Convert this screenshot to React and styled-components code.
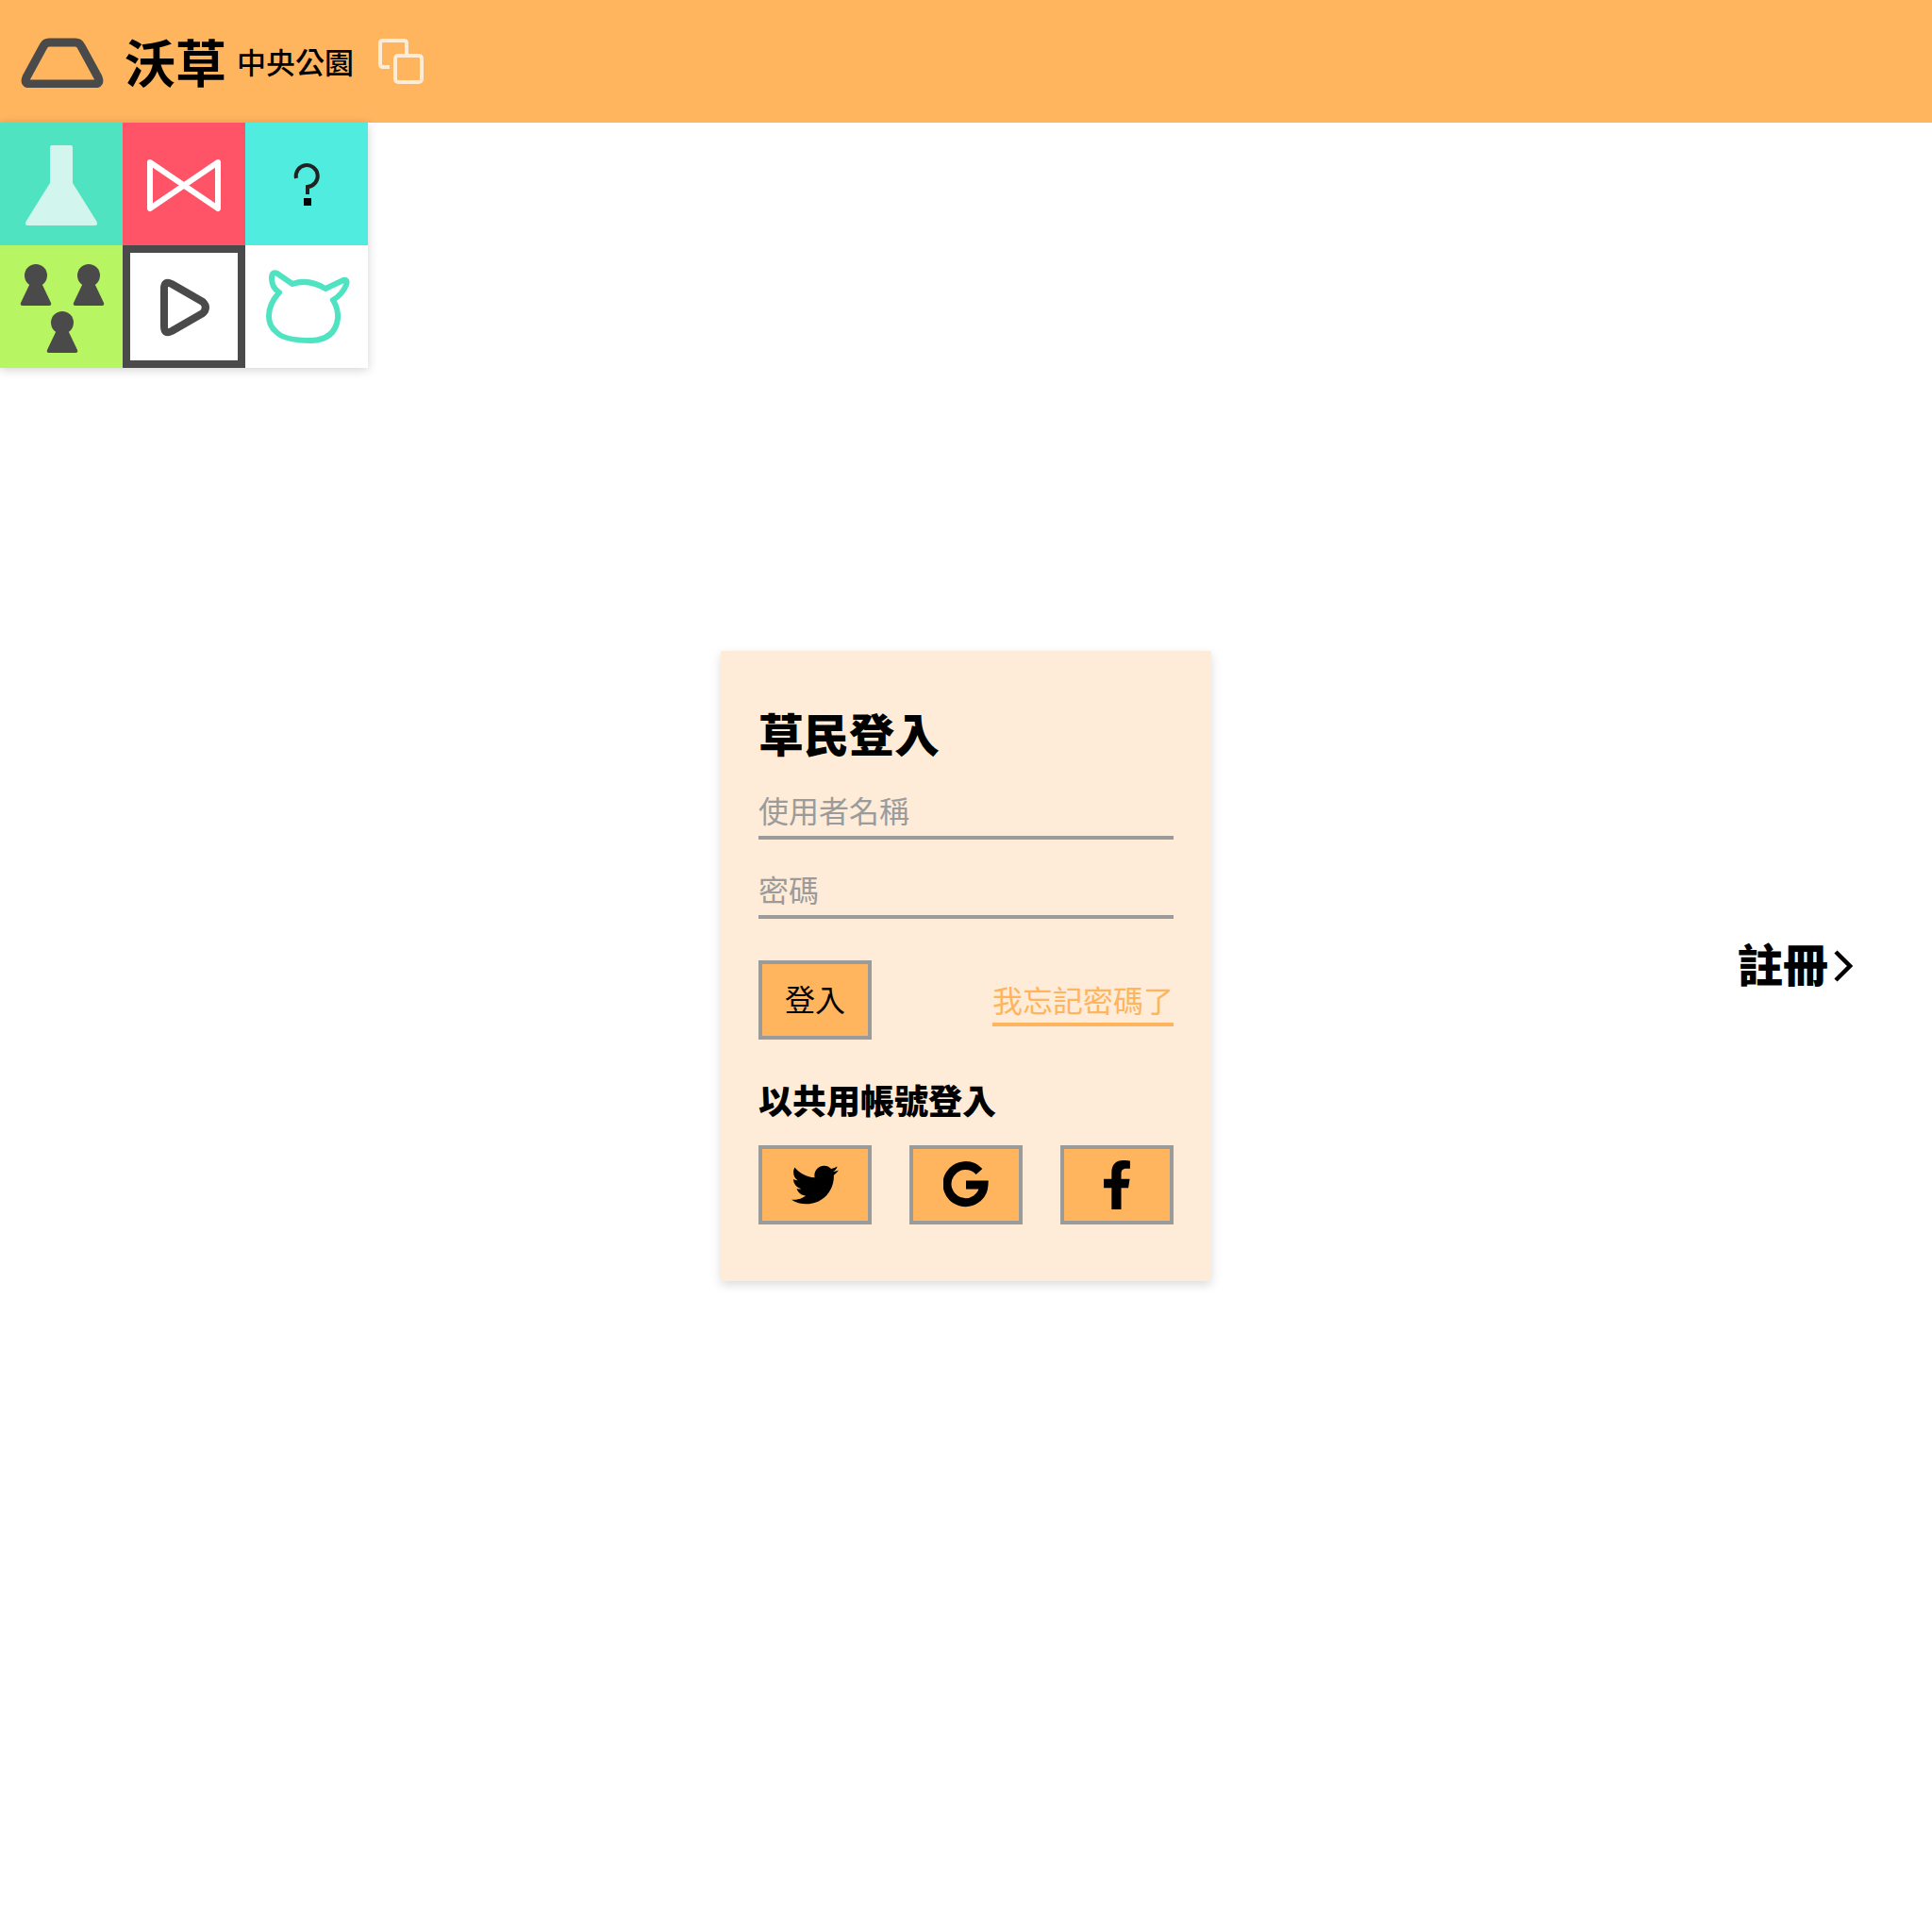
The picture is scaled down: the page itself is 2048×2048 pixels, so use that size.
import styled, { createGlobalStyle } from 'styled-components'
import { FaTwitter, FaFacebookF } from 'react-icons/fa'

const SANS = '"Noto Sans CJK TC", "Noto Sans", sans-serif'

const Global = createGlobalStyle`
  body {
    margin: 0;
    background: #fff;
    font-family: ${SANS};
  }
`

const Page = styled.div`
  height: 100vh;
  min-height: 2048px;
  display: grid;
  grid-template-rows: 520px 1fr 520px;
`

const Top = styled.div`
  display: flex;
  flex-direction: column;
`

const Header = styled.header`
  height: 130px;
  background: #ffb45e;
  display: flex;
  align-items: center;
  padding-left: 22px;
`

const BrandName = styled.span`
  margin-left: 22px;
  font-size: 54px;
  font-weight: 700;
  line-height: 54px;
  color: #000;
`

const ParkName = styled.span`
  margin-left: 11px;
  font-size: 31px;
  font-weight: 500;
  line-height: 32px;
  color: #000;
`

const CopyButton = styled.svg`
  margin-left: 26px;
  width: 48px;
  height: 48px;
`

const Nav = styled.nav`
  width: 390px;
  height: 260px;
  display: grid;
  grid-template-columns: repeat(3, 130px);
  grid-auto-rows: 130px;
  box-shadow: 0 2px 10px rgba(0, 0, 0, 0.18);
`

const NavCell = styled.a`
  display: block;
  box-sizing: border-box;
  width: 130px;
  height: 130px;
  background: ${p => p.$bg};
  border: ${p => (p.$active ? '8px solid #4a4a4a' : 'none')};
  svg {
    display: block;
    width: 130px;
    height: 130px;
    margin: ${p => (p.$active ? '-8px' : '0')};
  }
`

const Main = styled.main`
  display: grid;
  grid-template-columns: 1fr 520px 1fr;
  align-items: center;
`

const Card = styled.form`
  grid-column: 2;
  box-sizing: border-box;
  width: 520px;
  padding: 66px 40px 60px;
  background: #feecd8;
  box-shadow: 0 4px 10px rgba(0, 0, 0, 0.14);
  display: flex;
  flex-direction: column;
`

const Title = styled.h1`
  margin: 0 0 34px;
  font-size: 48px;
  line-height: 40px;
  font-weight: 900;
  color: #000;
`

const Field = styled.input`
  display: block;
  box-sizing: border-box;
  width: 100%;
  height: 60px;
  margin-bottom: 24px;
  padding: 0;
  border: none;
  border-bottom: 4px solid #9b9b9b;
  background: transparent;
  outline: none;
  font-family: ${SANS};
  font-size: 32px;
  font-weight: 400;
  &::placeholder {
    color: #9b9b9b;
    opacity: 1;
  }
`

const ActionRow = styled.div`
  margin-top: 20px;
  display: flex;
  justify-content: space-between;
  align-items: flex-end;
`

const OrangeButton = styled.button`
  box-sizing: border-box;
  width: 120px;
  height: 84px;
  padding: 0;
  background: #ffb45e;
  border: 4px solid #9b9b9b;
  color: #000;
  font-family: ${SANS};
  font-size: 32px;
  font-weight: 400;
  display: flex;
  align-items: center;
  justify-content: center;
`

const LoginButton = styled(OrangeButton)`
  padding-bottom: 5px;
`

const ForgotLink = styled.a`
  margin-bottom: 14px;
  border-bottom: 4px solid #ffb45e;
  color: #ffb45e;
  font-size: 32px;
  font-weight: 400;
  line-height: 50px;
`

const SubTitle = styled.h2`
  margin: 48px 0 34px;
  font-size: 36px;
  line-height: 30px;
  font-weight: 900;
  color: #000;
`

const SocialRow = styled.div`
  display: flex;
  justify-content: space-between;
`

const RegisterCol = styled.div`
  grid-column: 3;
  display: flex;
  justify-content: flex-end;
  padding-right: 84px;
`

const RegisterLink = styled.a`
  display: flex;
  align-items: center;
  gap: 6px;
  color: #000;
`

const RegisterText = styled.span`
  padding-bottom: 8px;
  font-size: 48px;
  line-height: 48px;
  font-weight: 900;
`

const Pawn = ({ x, y }) => (
  <g transform={`translate(${x} ${y})`}>
    <circle r="12" />
    <path d="M-6 8 L-16 29 Q-17 32 -14 32 H14 Q17 32 16 29 L6 8 Z" />
  </g>
)

export default function App() {
  return (
    <Page>
      <Global />
      <Top>
        <Header>
          <svg width="88" height="56" viewBox="0 -1 88 56" fill="none" stroke="#4a4a4a" strokeWidth="9" strokeLinejoin="round">
            <path d="M30 7 H58 Q62 7 64 11 L82 44 Q85 51 78 51 H10 Q3 51 6 44 L24 11 Q26 7 30 7 Z" />
          </svg>
          <BrandName>沃草</BrandName>
          <ParkName>中央公園</ParkName>
          <CopyButton viewBox="0 0 48 48" fill="none" stroke="#feecd8" strokeWidth="4">
            <path d="M30 16 V5 Q30 2 27 2 H5 Q2 2 2 5 V27 Q2 30 5 30 H12" />
            <rect x="18" y="18" width="28" height="28" rx="3" />
          </CopyButton>
        </Header>
        <Nav>
          <NavCell $bg="#50e3c2">
            <svg viewBox="0 0 130 130">
              <path fill="#d2f6ee" d="M55 24 H75 Q77 24 77 26 V64 L102 104 Q105 109 100 109 H30 Q25 109 28 104 L53 64 V26 Q53 24 55 24 Z" />
            </svg>
          </NavCell>
          <NavCell $bg="#ff5468">
            <svg viewBox="0 0 130 130">
              <path fill="none" stroke="#fff" strokeWidth="6" strokeLinejoin="round" d="M29 42 L101 91 V42 L29 91 Z" />
            </svg>
          </NavCell>
          <NavCell $bg="#4fecdf">
            <svg viewBox="0 0 130 130">
              <path fill="none" stroke="#222" strokeWidth="4" d="M54 59 A11.5 11.5 0 1 1 66 68 V76" />
              <rect x="62" y="80" width="8" height="8" fill="#000" />
            </svg>
          </NavCell>
          <NavCell $bg="#b8f562">
            <svg viewBox="0 0 130 130" fill="#4a4a4a">
              <Pawn x={38} y={32} />
              <Pawn x={94} y={32} />
              <Pawn x={66} y={82} />
            </svg>
          </NavCell>
          <NavCell $bg="#fff" $active>
            <svg viewBox="0 0 130 130">
              <path fill="none" stroke="#4a4a4a" strokeWidth="8" strokeLinejoin="round" d="M44 46 Q44 37 52 41 L85 60 Q91 66 85 72 L52 91 Q44 95 44 86 Z" />
            </svg>
          </NavCell>
          <NavCell $bg="#fff">
            <svg viewBox="0 0 130 130">
              <path fill="none" stroke="#50e3c2" strokeWidth="6" strokeLinejoin="round" d="M34 30 L50 41 Q67 35 85 46 L104 37 Q109 36 107 42 Q103 52 93 58 Q99 68 98 78 Q95 100 70 101 Q40 101 32 91 Q25 85 25 75 Q25 62 36 50 Q28 45 28 35 Q28 27 34 30 Z" />
            </svg>
          </NavCell>
        </Nav>
      </Top>
      <Main>
        <Card>
          <Title>草民登入</Title>
          <Field placeholder="使用者名稱" />
          <Field placeholder="密碼" type="password" />
          <ActionRow>
            <LoginButton type="button">登入</LoginButton>
            <ForgotLink>我忘記密碼了</ForgotLink>
          </ActionRow>
          <SubTitle>以共用帳號登入</SubTitle>
          <SocialRow>
            <OrangeButton type="button"><FaTwitter size={50} /></OrangeButton>
            <OrangeButton type="button">
              <svg width="48" height="50" viewBox="0 0 48 50" fill="none" stroke="#000" strokeWidth="9">
                <path d="M38 11 A19.5 19.5 0 1 0 43 25 H24" />
              </svg>
            </OrangeButton>
            <OrangeButton type="button"><FaFacebookF size={52} /></OrangeButton>
          </SocialRow>
        </Card>
        <RegisterCol>
          <RegisterLink>
            <RegisterText>註冊</RegisterText>
            <svg width="20" height="34" viewBox="0 0 20 34" fill="none" stroke="#000" strokeWidth="4.5">
              <path d="M2 2 L17 17 L2 32" />
            </svg>
          </RegisterLink>
        </RegisterCol>
      </Main>
    </Page>
  )
}
